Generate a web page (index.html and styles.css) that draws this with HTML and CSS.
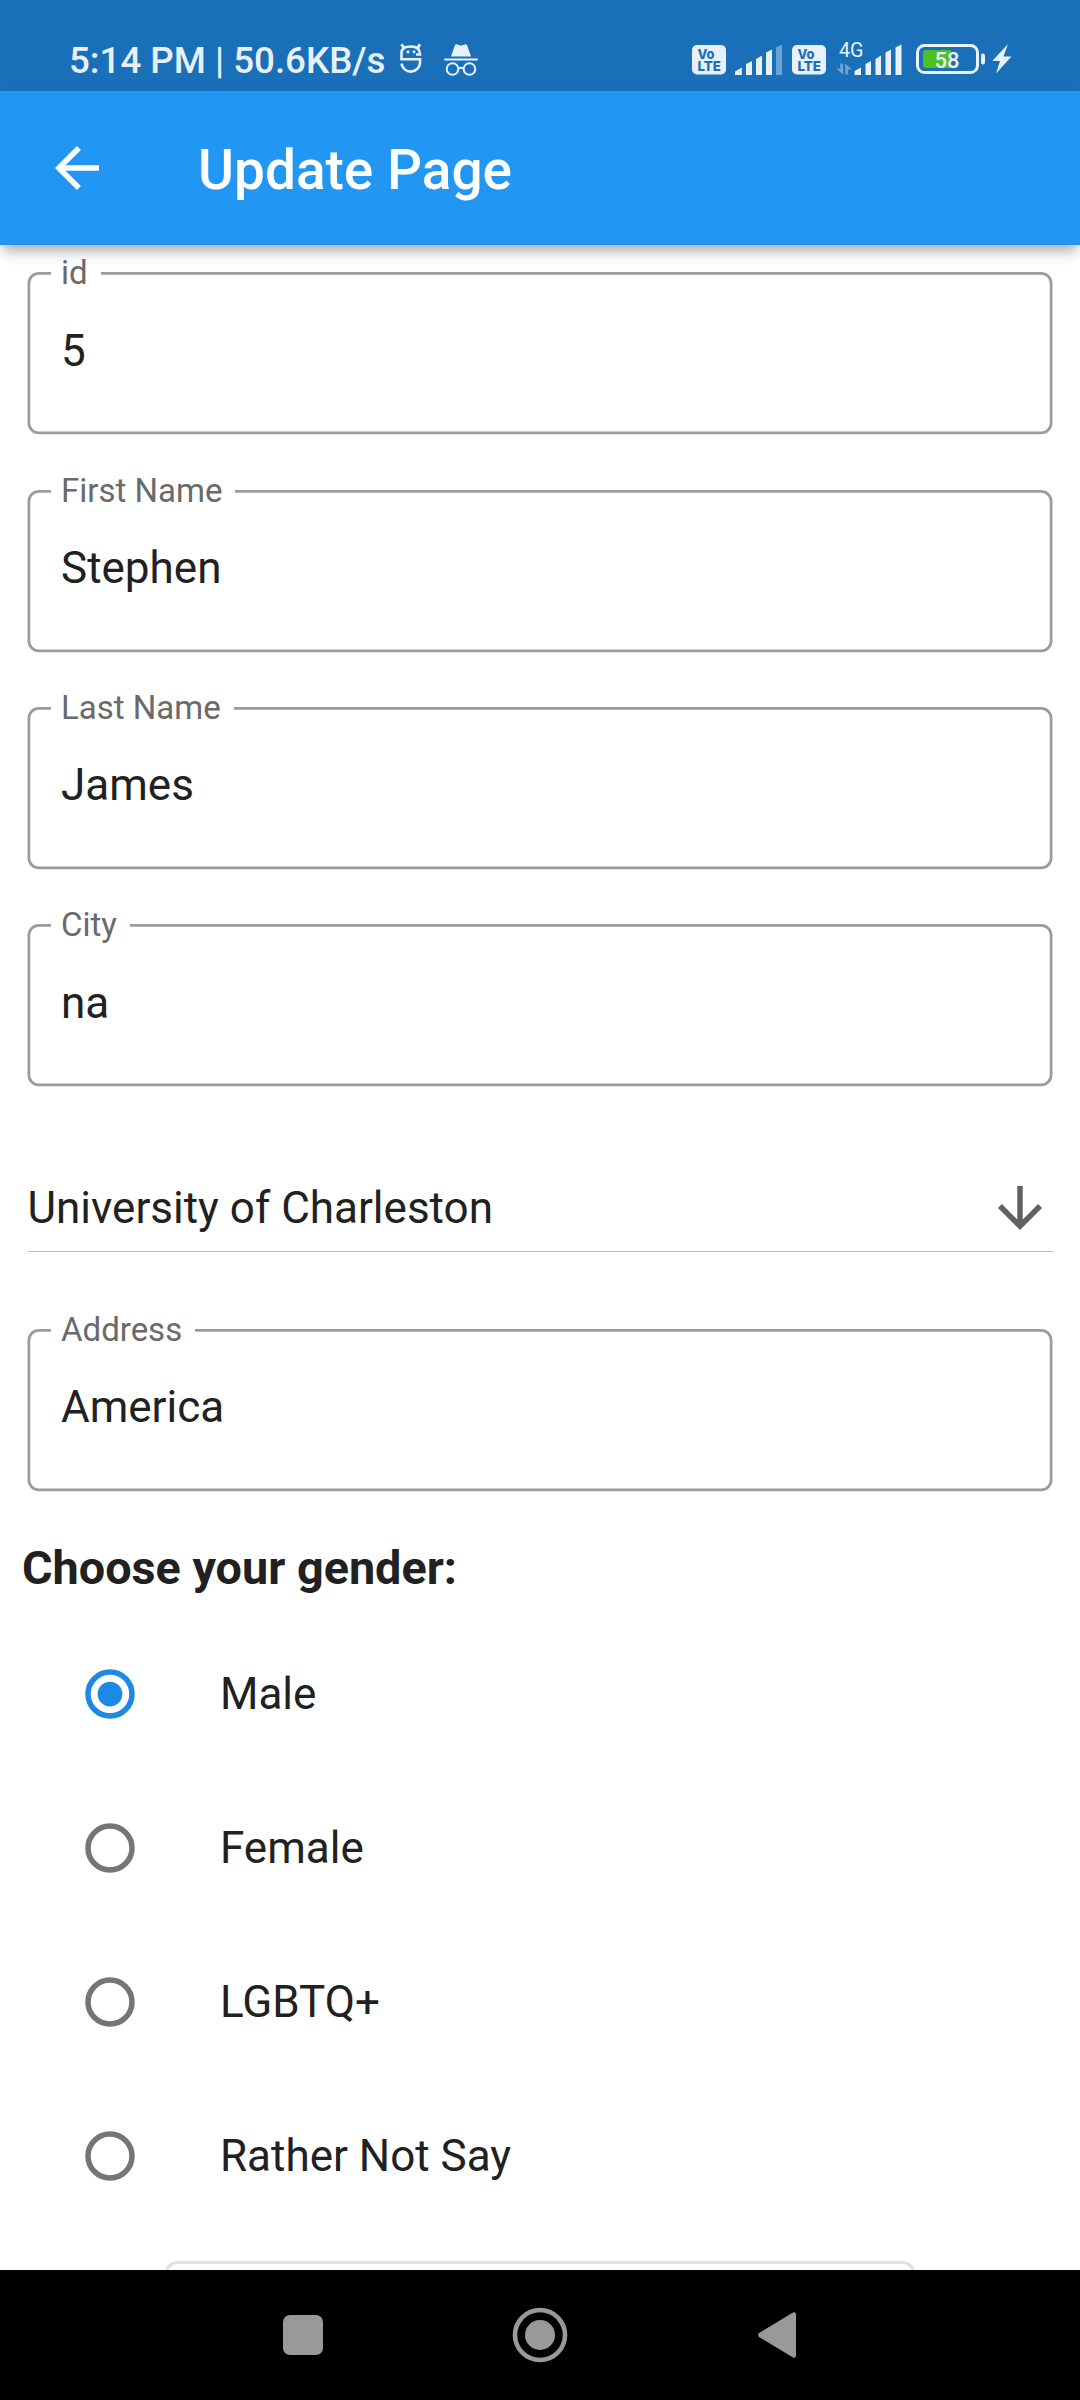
FILE: index.html
```html
<!DOCTYPE html>
<html lang="en">
<head>
<meta charset="utf-8">
<title>Update Page</title>
<link rel="stylesheet" href="styles.css">
</head>
<body>
<div class="screen">
  <div class="status">
    <span class="clock">5:14 PM | 50.6KB/s</span>
    <svg class="s-app" width="24" height="32" viewBox="0 0 24 32" fill="none" stroke="currentColor" stroke-width="2.6">
      <path d="M2.500 17V10Q2.500 3.500 12 3.500Q21 3.500 21 11.500H17"/>
      <path d="M1.500 16.200H21V20A9.300 9.300 0 0 1 2.500 20.500"/>
      <path d="M2.500 1.200L5 5M21 1.200L18.500 5" stroke-width="3"/>
      <path d="M7.700 8.900h2.600M13.700 8.900h2.600" stroke-width="2.600"/>
    </svg>
    <svg class="s-incog" width="34" height="32" viewBox="0 0 34 32" fill="none" stroke="currentColor" stroke-width="2">
      <path d="M7 12.500L10.800 1.500Q11.500 0 13.300 .4L17 1.700L20.700 .4Q22.500 0 23.200 1.500L27 12.500Z" fill="currentColor" stroke="none"/>
      <path d="M.3 15.500H33.700"/>
      <circle cx="8.500" cy="25" r="5.800"/><circle cx="25.500" cy="25" r="5.800"/>
      <path d="M14.300 24.500Q17 22.800 19.700 24.500"/>
    </svg>
    <span class="grow"></span>
    <svg class="volte" width="34" height="30" viewBox="0 0 34 30">
      <rect width="34" height="29.500" rx="5" fill="currentColor"/>
      <text class="vo" x="5.500" y="13.500" textLength="17" lengthAdjust="spacingAndGlyphs">Vo</text>
      <text class="vo" x="5.500" y="25.500" textLength="23.500" lengthAdjust="spacingAndGlyphs">LTE</text>
    </svg>
    <svg class="bars" width="48" height="32" viewBox="0 0 48 32" fill="currentColor">
      <path d="M0 27.500L6.800 23.500V30.500Q6.800 31 6.300 31H.5Q0 31 0 30.500ZM11 20L17 17V30.500Q17 31 16.500 31H11.500Q11 31 11 30.500ZM21 15L27 11.500V30.500Q27 31 26.500 31H21.500Q21 31 21 30.500ZM31 8.500L37 5.500V30.500Q37 31 36.500 31H31.500Q31 31 31 30.500Z"/>
      <path d="M41 3.500L47 .5V30.500Q47 31 46.500 31H41.500Q41 31 41 30.500Z" opacity=".4"/>
    </svg>
    <svg class="volte second" width="34" height="30" viewBox="0 0 34 30">
      <rect width="34" height="29.500" rx="5" fill="currentColor"/>
      <text class="vo" x="5.500" y="13.500" textLength="17" lengthAdjust="spacingAndGlyphs">Vo</text>
      <text class="vo" x="5.500" y="25.500" textLength="23.500" lengthAdjust="spacingAndGlyphs">LTE</text>
    </svg>
    <svg class="net" width="68" height="36" viewBox="0 0 68 36" fill="currentColor">
      <text class="gen" x="3" y="17.500" textLength="24.500" lengthAdjust="spacingAndGlyphs">4G</text>
      <path d="M4.200 24.500H7.200V35.500L0 29.500H4.200ZM9.200 35.500V24.500L16 30.500H12.200V35.500Z" opacity=".4"/>
      <path d="M18.500 32L25 28.500V35.500Q25 36 24.500 36H19Q18.500 36 18.500 35.500ZM29.500 25L35 22V35.500Q35 36 34.500 36H30Q29.500 36 29.500 35.500ZM39.500 20L45 16.500V35.500Q45 36 44.500 36H40Q39.500 36 39.500 35.500ZM49.500 13.500L55 10.500V35.500Q55 36 54.500 36H50Q49.500 36 49.500 35.500ZM59.500 8.500L65.500 5.500V35.500Q65.500 36 65 36H60Q59.500 36 59.500 35.500Z"/>
    </svg>
    <svg class="battery" width="70" height="30" viewBox="0 0 70 30">
      <rect x="1.500" y="1.500" width="60" height="27" rx="7" fill="none" stroke="currentColor" stroke-width="3"/>
      <rect x="65" y="9.500" width="4" height="11" rx="2" fill="currentColor"/>
      <path d="M10 6H35V24H10Q7 24 7 21V9Q7 6 10 6Z" fill="#4fbf26"/>
      <text class="pct" x="18.500" y="23.500" textLength="25" lengthAdjust="spacingAndGlyphs">58</text>
    </svg>
    <svg class="bolt" width="20" height="30" viewBox="0 0 20 30" fill="currentColor"><path d="M16 0L.3 17H8L4 29.500L19.500 12.500H11.500Z"/></svg>
  </div>

  <header class="appbar">
    <svg width="66" height="66" viewBox="0 0 24 24" fill="currentColor"><path d="M20 11H7.830l5.590-5.590L12 4l-8 8 8 8 1.410-1.410L7.830 13H20v-2z"/></svg>
    <h1>Update Page</h1>
  </header>

  <main class="form">
    <div class="field"><svg class="outline"><rect x="1.875" y="1.375" width="1022.250" height="159.500" rx="10"/></svg><label>id</label><span class="value">5</span></div>
    <div class="field"><svg class="outline"><rect x="1.875" y="1.375" width="1022.250" height="159.500" rx="10"/></svg><label>First Name</label><span class="value">Stephen</span></div>
    <div class="field"><svg class="outline"><rect x="1.875" y="1.375" width="1022.250" height="159.500" rx="10"/></svg><label>Last Name</label><span class="value">James</span></div>
    <div class="field"><svg class="outline"><rect x="1.875" y="1.375" width="1022.250" height="159.500" rx="10"/></svg><label>City</label><span class="value">na</span></div>

    <div class="select">
      <span>University of Charleston</span>
      <svg width="66" height="66" viewBox="0 0 24 24" fill="currentColor"><path d="M20 12l-1.410-1.410L13 16.170V4h-2v12.170l-5.580-5.590L4 12l8 8 8-8z"/></svg>
    </div>

    <div class="field address"><svg class="outline"><rect x="1.875" y="1.375" width="1022.250" height="159.500" rx="10"/></svg><label>Address</label><span class="value">America</span></div>

    <h2>Choose your gender:</h2>
    <div class="option"><svg class="radio on" viewBox="0 0 50 50"><circle class="ring" cx="25" cy="25" r="22"/><circle class="dot" cx="25" cy="25" r="12.375"/></svg><span>Male</span></div>
    <div class="option"><svg class="radio" viewBox="0 0 50 50"><circle class="ring" cx="25" cy="25" r="22"/></svg><span>Female</span></div>
    <div class="option"><svg class="radio" viewBox="0 0 50 50"><circle class="ring" cx="25" cy="25" r="22"/></svg><span>LGBTQ+</span></div>
    <div class="option"><svg class="radio" viewBox="0 0 50 50"><circle class="ring" cx="25" cy="25" r="22"/></svg><span>Rather Not Say</span></div>
    <div class="button"></div>
  </main>

  <nav class="nav">
    <svg width="40" height="40" viewBox="0 0 40 40" fill="currentColor"><rect width="40" height="40" rx="7"/></svg>
    <svg width="56" height="56" viewBox="0 0 56 56"><circle cx="28" cy="28" r="25" fill="none" stroke="currentColor" stroke-width="4.600"/><circle cx="28" cy="28" r="15" fill="currentColor"/></svg>
    <svg width="38" height="46" viewBox="0 0 38 46" fill="currentColor"><path d="M35 .5Q38 -.5 38 2.500V43.500Q38 46.500 35 45.500L1 25Q-.8 23 1 21Z"/></svg>
  </nav>
</div>
</body>
</html>
```
FILE: styles.css
```css
* { box-sizing: border-box; }
body { margin: 0; background: #fff; font-family: Roboto, "Liberation Sans", sans-serif; color: #212121; }
svg { display: block; flex: none; }

.screen { display: flex; flex-direction: column; width: 1080px; height: 2400px; overflow: hidden; }

.status { flex: none; display: flex; align-items: flex-start; height: 91px; padding: 0 68px 0 69px; background: #1a70b8; color: #e8f1fa; }
.clock { margin-top: 40px; width: 317px; font-size: 36.700px; line-height: 42px; font-weight: 500; white-space: nowrap; }
.s-app { margin: 43px 0 0 13px; }
.s-incog { margin: 44px 0 0 21px; }
.grow { flex: 1; }
.volte { margin-top: 45px; }
.vo { font: 800 13.500px Inter, sans-serif; fill: #1a70b8; }
.bars { margin: 44px 0 0 9px; }
.second { margin-left: 9px; }
.net { margin: 39px 0 0 10px; }
.gen { font: 400 20px Roboto, sans-serif; }
.battery { margin: 44px 0 0 12px; }
.pct { font: 500 22.500px Roboto, sans-serif; fill: currentColor; }
.bolt { margin: 44px 0 0 6px; }

.appbar { position: relative; z-index: 1; flex: none; display: flex; align-items: center; height: 154px; padding-left: 44px; gap: 88px; background: #2196f3; color: #fff; box-shadow: 0 8px 12px -3px rgba(0,0,0,.25), 0 8px 16px -2px rgba(0,0,0,.12); }
.appbar h1 { margin: 3px 0 0; font-size: 55px; line-height: 64px; font-weight: 500; white-space: nowrap; }

.form { flex: 1; min-height: 0; overflow: hidden; display: flex; flex-direction: column; padding: 27.250px 27px 0; font-size: 44px; line-height: 52px; }
.field { position: relative; flex: none; height: 162.250px; margin-bottom: 55px; padding: 52.500px 34px 0; }
.outline { position: absolute; inset: 0; width: 1026px; height: 162.250px; overflow: visible; fill: none; stroke: #9c9c9c; stroke-width: 2.750px; }
.field label { position: absolute; top: -19px; left: 24px; padding: 0 13px 0 10px; background: #fff; font-size: 33px; line-height: 39px; color: #6a6a6a; white-space: nowrap; }
.value { display: block; }

.select { flex: none; display: flex; align-items: center; justify-content: space-between; height: 77px; margin: 34px .5px 0; padding-bottom: 10px; border-bottom: 1px solid #bdbdbd; }
.select svg { color: #616161; }
.address { margin-top: 76.500px; margin-bottom: 0; }

.form h2 { flex: none; margin: 50.250px 0 0 -5px; font-size: 46.750px; line-height: 54px; font-weight: 700; }
.form h2 + .option { margin-top: 21.750px; }
.option { flex: none; display: flex; align-items: center; height: 154px; padding-left: 58px; gap: 85px; }
.radio { width: 50px; height: 50px; }
.ring { fill: none; stroke: #757575; stroke-width: 5.500px; }
.on .ring { stroke: #1e88e5; }
.dot { fill: #1e88e5; }

.button { flex: none; align-self: center; width: 750px; height: 100px; margin-top: 28px; border: 3px solid #e0e0e0; border-radius: 12px; }

.nav { flex: none; display: grid; grid-template-columns: repeat(3, 237px); justify-content: center; place-items: center; height: 130px; padding-right: 1px; background: #000; color: #999; }
```
